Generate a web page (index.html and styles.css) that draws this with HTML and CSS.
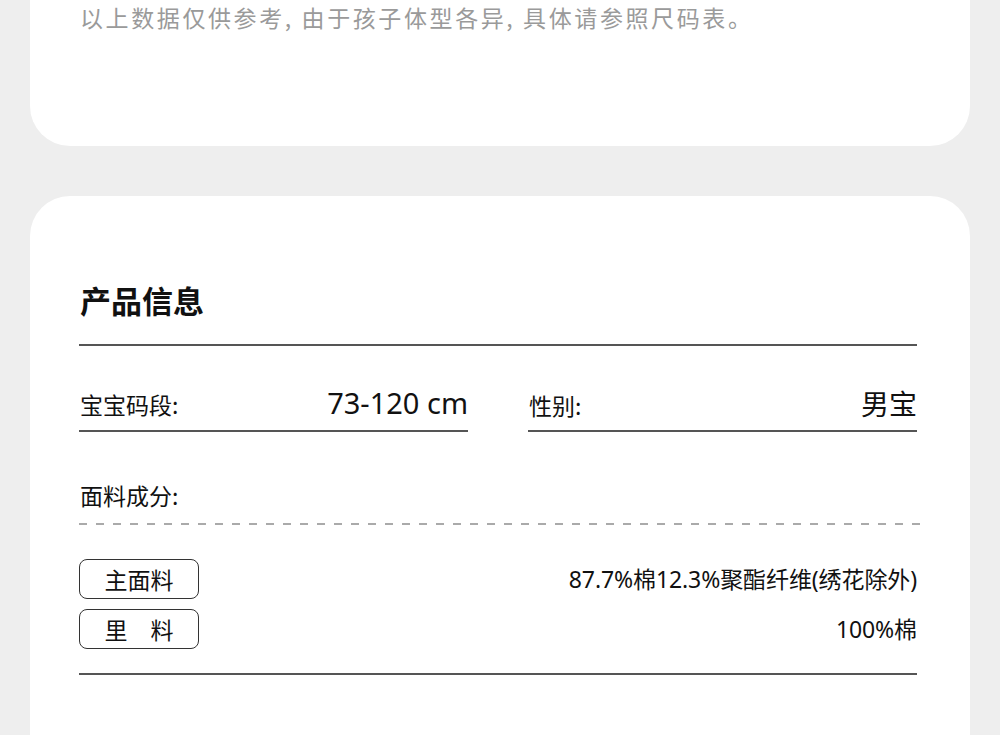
FILE: index.html
```html
<!DOCTYPE html>
<html lang="zh-CN">
<head>
<meta charset="utf-8">
<title>产品信息</title>
<link rel="stylesheet" href="styles.css">
</head>
<body>
<div class="page">
  <section class="card card-top">
    <p class="note">以上数据仅供参考, 由于孩子体型各异, 具体请参照尺码表。</p>
  </section>

  <section class="card card-info">
    <h2 class="title">产品信息</h2>
    <div class="rule"></div>

    <div class="fields">
      <div class="field">
        <span class="label">宝宝码段:</span>
        <span class="value value-num">73-120 cm</span>
      </div>
      <div class="field">
        <span class="label">性别:</span>
        <span class="value value-cjk">男宝</span>
      </div>
    </div>

    <div class="comp-label">面料成分:</div>
    <div class="dashed"></div>

    <div class="materials">
      <div class="mat-row">
        <span class="pill">主面料</span>
        <span class="mat-text">87.7%棉12.3%聚酯纤维(绣花除外)</span>
      </div>
      <div class="mat-row">
        <span class="pill">里　料</span>
        <span class="mat-text">100%棉</span>
      </div>
    </div>

    <div class="rule rule-bottom"></div>
  </section>
</div>
</body>
</html>
```

FILE: styles.css
```css
* { box-sizing: border-box; }

html, body {
  margin: 0;
  padding: 0;
  background: #eeeeee;
  font-family: "Noto Sans", "Noto Sans CJK SC", sans-serif;
  color: #111;
  overflow: hidden;
}

.page {
  display: flex;
  flex-direction: column;
  gap: 50px;
  padding: 0 30px;
}

.card {
  background: #ffffff;
  border-radius: 40px;
}

.card-top {
  margin-top: -60px;
  padding: 60px 20px 112px 50px;
  border-radius: 0 0 40px 40px;
}

.note {
  margin: 0;
  font-family: "Noto Sans CJK SC", sans-serif;
  font-size: 23px;
  line-height: 34px;
  letter-spacing: 2.6px;
  color: #9a9a9a;
  white-space: nowrap;
}

.card-info {
  padding: 84px 53px 200px 49px;
  border-radius: 40px 40px 0 0;
}

.title {
  margin: 0 0 0 1px;
  font-family: "Noto Sans CJK SC", sans-serif;
  font-size: 31px;
  font-weight: 700;
  line-height: 40px;
  color: #111;
}

.rule {
  height: 2px;
  background: #555;
  margin-top: 24px;
}

.fields {
  display: grid;
  grid-template-columns: 1fr 1fr;
  column-gap: 60px;
}

.field {
  display: flex;
  justify-content: space-between;
  align-items: baseline;
  padding: 37px 0 5px 1px;
  border-bottom: 2px solid #555;
}

.label {
  font-family: "Noto Sans CJK SC", sans-serif;
  font-size: 23px;
  line-height: 40px;
}

.value {
  line-height: 40px;
}

.value-num {
  font-family: "Noto Sans", sans-serif;
  font-size: 29px;
}

.value-cjk {
  font-family: "Noto Sans CJK SC", sans-serif;
  font-size: 28px;
}

.comp-label {
  margin-top: 47px;
  padding-left: 1px;
  font-family: "Noto Sans CJK SC", sans-serif;
  font-size: 23px;
  line-height: 32px;
}

.dashed {
  margin-top: 12px;
  margin-right: -4px;
  height: 2px;
  background-image: linear-gradient(to right, #aaaaaa 8px, transparent 8px);
  background-size: 17px 2px;
  background-repeat: repeat-x;
}

.materials {
  margin-top: 34px;
  display: flex;
  flex-direction: column;
  gap: 10px;
}

.mat-row {
  display: flex;
  justify-content: space-between;
  align-items: center;
}

.pill {
  width: 120px;
  height: 40px;
  border: 1px solid #333;
  border-radius: 8px;
  display: flex;
  align-items: center;
  justify-content: center;
  font-family: "Noto Sans CJK SC", sans-serif;
  font-size: 23px;
  line-height: 1;
}

.mat-text {
  font-family: "Noto Sans", "Noto Sans CJK SC", sans-serif;
  font-size: 23px;
  line-height: 30px;
  letter-spacing: -0.1px;
}

.rule-bottom {
  margin-top: 24px;
}
```
